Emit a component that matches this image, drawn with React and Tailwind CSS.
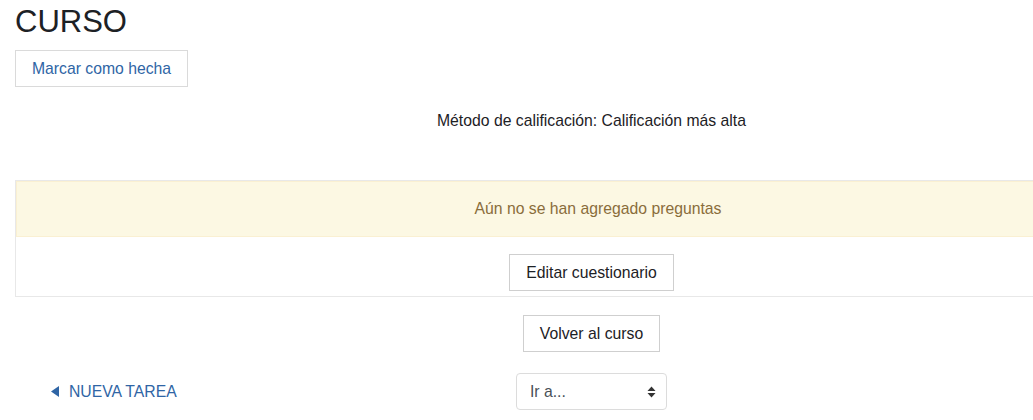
export default function App() {
  return (
    <div className="w-[1033px] h-[420px] overflow-hidden bg-white" style={{ fontFamily: '"Liberation Sans", Arial, sans-serif' }}>
      <div className="w-[1153px] ml-[15px]">
        <h1 className="text-[31px] leading-[37px] text-[#1d2125] pt-[3px] m-0">CURSO</h1>
        <div className="mt-[10px]">
          <button className="h-[37px] w-[173px] border border-[#dadada] bg-white text-[15.75px] text-[#2f65a5]">Marcar como hecha</button>
        </div>
        <div className="mt-[24px] text-center text-[15.75px] leading-[20px] text-[#1d2125]">Método de calificación: Calificación más alta</div>
        <div className="mt-[49px] border border-[#e8e8e8]">
          <div className="h-[56px] bg-[#fcf8e3] border border-[#faf0d2] flex items-center justify-center pl-[13px] text-[15.75px] text-[#8a6d3b]">Aún no se han agregado preguntas</div>
          <div className="flex justify-center pt-[17px] pb-[5px]">
            <button className="h-[37px] w-[165px] border border-[#cfcfcf] bg-white text-[15.75px] text-[#1d2125]">Editar cuestionario</button>
          </div>
        </div>
        <div className="flex justify-center mt-[18px]">
          <button className="h-[37px] w-[137px] border border-[#cfcfcf] bg-white text-[15.75px] text-[#1d2125]">Volver al curso</button>
        </div>
        <div className="grid grid-cols-3 mt-[21px] items-center">
          <div className="pl-[36px] text-[15.75px] text-[#2f65a5] flex items-center">
            <svg width="8" height="11" viewBox="0 0 8 11" className="mr-[10px]">
              <path d="M0 5.5 L8 0 L8 11 Z" fill="#2f65a5" />
            </svg>
            <span>NUEVA TAREA</span>
          </div>
          <div className="flex justify-center">
            <div className="h-[37px] w-[151px] border border-[#dcdcdc] rounded-[4px] flex items-center justify-between pl-[13px] pr-[10px] text-[15.75px] text-[#495057]">
              <span>Ir a...</span>
              <svg width="9" height="12" viewBox="0 0 9 12">
                <path d="M4.5 0.5 L8.5 5 L0.5 5 Z" fill="#333" />
                <path d="M4.5 11.5 L8.5 7 L0.5 7 Z" fill="#333" />
              </svg>
            </div>
          </div>
          <div></div>
        </div>
      </div>
    </div>
  );
}
